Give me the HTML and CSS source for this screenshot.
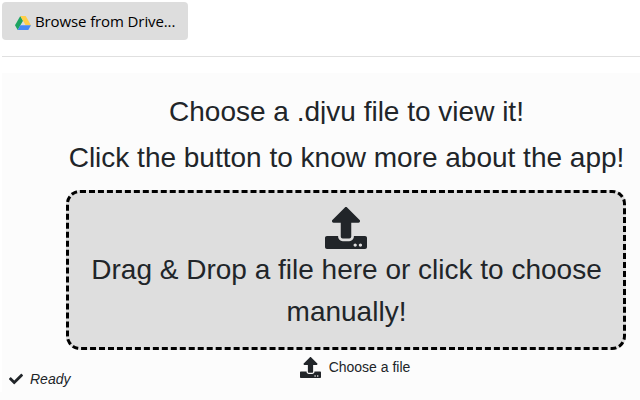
FILE: index.html
```html
<!DOCTYPE html>
<html lang="en">
<head>
<meta charset="utf-8">
<title>DjVu Viewer</title>
<link rel="stylesheet" href="styles.css">
</head>
<body>
<svg class="defs" aria-hidden="true">
  <symbol id="upload" viewBox="0 0 512 512"><path d="M296 384h-80c-13.3 0-24-10.7-24-24V192h-87.7c-17.8 0-26.7-21.5-14.1-34.1L242.3 5.7c7.5-7.5 19.8-7.5 27.3 0l152.2 152.2c12.6 12.6 3.7 34.1-14.1 34.1H320v168c0 13.3-10.7 24-24 24zm216-8v112c0 13.3-10.7 24-24 24H24c-13.3 0-24-10.7-24-24V376c0-13.3 10.7-24 24-24h136v8c0 30.9 25.1 56 56 56h80c30.9 0 56-25.1 56-56v-8h136c13.3 0 24 10.7 24 24zm-124 88c0-11-9-20-20-20s-20 9-20 20 9 20 20 20 20-9 20-20zm64 0c0-11-9-20-20-20s-20 9-20 20 9 20 20 20 20-9 20-20z"/></symbol>
</svg>
<header class="toolbar">
  <button class="drive">
    <svg class="drive-icon" viewBox="0 0 16 14"><path fill="#1da462" d="M5.3 0 0 9.3 2.7 14 8 4.7z"/><path fill="#ffcf48" d="M5.3 0h5.4L16 9.3h-5.4z"/><path fill="#4688f4" d="M5.4 9.3H16L13.3 14H2.7z"/></svg>
    <span class="drive-label">Browse from Drive...</span>
  </button>
</header>
<hr class="divider">
<main class="viewer">
  <h1 class="title">Choose a .djvu file to view it!</h1>
  <p class="hint">Click the button to know more about the app!</p>
  <div class="dropzone">
    <svg class="icon-large"><use href="#upload"/></svg>
    <p class="drop-text">Drag &amp; Drop a file here or click to choose manually!</p>
  </div>
  <div class="choose"><svg class="icon-small"><use href="#upload"/></svg><span class="choose-label">Choose a file</span></div>
  <footer class="status"><svg class="check" viewBox="0 0 512 512"><path d="M173.898 439.404l-166.4-166.4c-9.997-9.997-9.997-26.206 0-36.204l36.203-36.204c9.997-9.998 26.207-9.998 36.204 0L192 312.69 432.095 72.596c9.997-9.997 26.207-9.997 36.204 0l36.203 36.204c9.997 9.997 9.997 26.206 0 36.204l-294.4 294.401c-9.998 9.997-26.207 9.997-36.204-.001z"/></svg><em>Ready</em></footer>
</main>
<div class="page-end"></div>
</body>
</html>
```
FILE: styles.css
```css
* { box-sizing: border-box; }
body {
  margin: 0;
  padding: 2px 0 0 2px;
  height: 400px;
  overflow: hidden;
  background: #fff;
  color: #212529;
  font-family: "Liberation Sans", Arial, sans-serif;
}
svg { display: block; fill: currentColor; flex: none; }
.defs { display: none; }
.toolbar { height: 38px; }
.drive {
  display: flex;
  align-items: center;
  gap: 4px;
  width: 186px;
  height: 38px;
  padding: 0 0 0 13px;
  border: 0;
  border-radius: 4px;
  background: #ddd;
  color: #000;
}
.drive-icon { width: 16px; height: 14px; margin-top: 3px; }
.drive-label {
  font: 15px/20px "Open Sans", sans-serif;
  letter-spacing: -0.11px;
  white-space: nowrap;
}
.divider { height: 1px; margin: 16px 0; border: 0; background: #e0e0e0; }
.viewer {
  display: flex;
  flex-direction: column;
  align-items: center;
  height: 319px;
  padding: 21px 0 0 50px;
  background: #fcfcfc;
}
.title, .hint, .drop-text { margin: 0; font-size: 28px; font-weight: 400; white-space: nowrap; }
.title { height: 30px; padding-left: 1px; line-height: 36px; overflow: hidden; }
.hint { margin-top: 13px; padding-left: 1px; line-height: 42px; }
.dropzone {
  display: flex;
  flex-direction: column;
  align-items: center;
  width: 560px;
  height: 160px;
  margin-top: 11px;
  padding: 14px;
  border: 3px dashed #000;
  border-radius: 14px;
  background: #dedede;
}
.icon-large { width: 42px; height: 42px; }
.drop-text { padding-left: 1px; line-height: 42px; text-align: center; white-space: normal; }
.choose {
  display: flex;
  align-items: center;
  gap: 8px;
  height: 21px;
  margin: 7px 0 0 18px;
  font-size: 14px;
}
.choose-label { padding-bottom: 2px; }
.icon-small { width: 21px; height: 21px; }
.status {
  display: flex;
  align-items: center;
  align-self: flex-start;
  gap: 7px;
  height: 16px;
  margin: -7px 0 0 -43px;
  font-size: 14px;
}
.check { width: 14px; height: 14px; }
.page-end { height: 8px; margin-left: -2px; background: #fcfcfc; }
```
